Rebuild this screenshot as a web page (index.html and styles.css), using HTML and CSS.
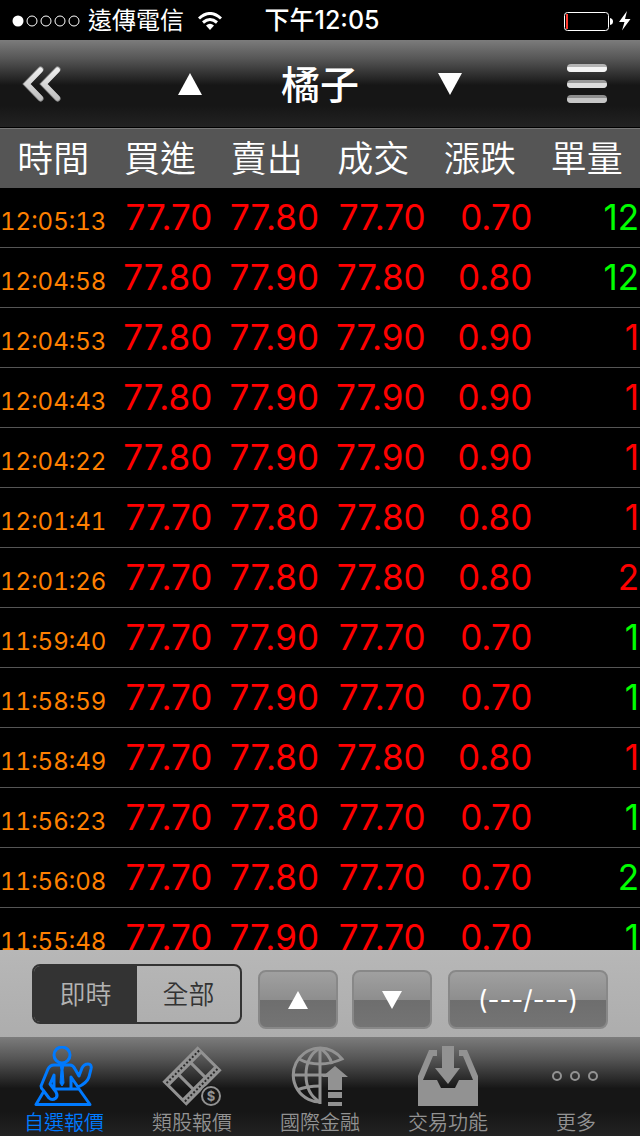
FILE: index.html
```html
<!DOCTYPE html>
<html lang="zh-Hant">
<head>
  <meta charset="UTF-8">
  <meta name="viewport" content="width=device-width">
  <title>橘子</title>
  <link rel="stylesheet" href="styles.css">
</head>
<body>
  <div class="status-bar">
    <div class="carrier">
      <svg width="68" height="12" viewBox="0 0 68 12">
        <circle cx="6" cy="6" r="5.5" fill="#fff"/>
        <g fill="none" stroke="#fff">
          <circle cx="20" cy="6" r="5"/>
          <circle cx="34" cy="6" r="5"/>
          <circle cx="48" cy="6" r="5"/>
          <circle cx="62" cy="6" r="5"/>
        </g>
      </svg>
      <span>遠傳電信</span>
      <svg class="wifi" width="24" height="18" viewBox="0 0 24 18">
        <g fill="none" stroke="#fff" stroke-width="3">
          <path d="M1 6.5Q12 -3.5 23 6.5"/>
          <path d="M5 10.5Q12 4.5 19 10.5"/>
        </g>
        <path d="M8 13.5Q12 10 16 13.5L12 18Z" fill="#fff"/>
      </svg>
    </div>
    <span class="clock">下午12:05</span>
    <div class="battery">
      <svg width="68" height="20" viewBox="0 0 68 20">
        <rect x="0.5" y="1.5" width="44" height="18" rx="3" fill="none" stroke="#fff"/>
        <rect x="2" y="3" width="2" height="15" fill="#ff3b30"/>
        <path d="M46 7q3 .5 3 3.500t-3 3.500z" fill="#fff"/>
        <path d="M63 0L55 11h5.500L58 19.500L66.500 8H61Z" fill="#fff"/>
      </svg>
    </div>
  </div>

  <header class="nav-bar">
    <button class="icon-btn back-btn" aria-label="返回">
      <svg width="40" height="38" viewBox="0 0 40 38">
        <defs>
          <linearGradient id="silver" gradientUnits="userSpaceOnUse" x1="0" y1="0" x2="0" y2="38">
            <stop offset="0" stop-color="#f4f4f4"/>
            <stop offset="1" stop-color="#b8b8b8"/>
          </linearGradient>
        </defs>
        <g fill="none" stroke="#8c8c8c" stroke-width="6" stroke-linecap="round">
          <path d="M18.500 4.500L4.500 19L18.500 33.500"/>
          <path d="M35.500 4.500L21.500 19L35.500 33.500"/>
        </g>
        <g fill="none" stroke="url(#silver)" stroke-width="5" stroke-linecap="round">
          <path d="M18.500 5L5 19L18.500 33"/>
          <path d="M35.500 5L22 19L35.500 33"/>
        </g>
      </svg>
    </button>
    <div class="stock-switch">
      <button class="icon-btn" aria-label="上一檔">
        <svg width="24" height="22" viewBox="0 0 24 22"><path d="M12 0L24 22H0Z" fill="#fff"/></svg>
      </button>
      <h1>橘子</h1>
      <button class="icon-btn" aria-label="下一檔">
        <svg width="24" height="22" viewBox="0 0 24 22"><path d="M0 0H24L12 22Z" fill="#fff"/></svg>
      </button>
    </div>
    <button class="icon-btn menu-btn" aria-label="選單">
      <svg width="40" height="40" viewBox="0 0 40 40">
        <rect y="0" width="40" height="8" rx="4" fill="#b4b4b4"/>
        <path d="M0 4Q0 3 1 3H39Q40 3 40 4Q40 8 36 8H4Q0 8 0 4Z" fill="#f4f4f4"/>
        <rect y="16" width="40" height="8" rx="4" fill="#999"/>
        <path d="M0 20Q0 19 1 19H39Q40 19 40 20Q40 24 36 24H4Q0 24 0 20Z" fill="#ddd"/>
        <rect y="31" width="40" height="8" rx="4" fill="#8e8e8e"/>
        <path d="M0 35Q0 34 1 34H39Q40 34 40 35Q40 39 36 39H4Q0 39 0 35Z" fill="#c6c6c6"/>
      </svg>
    </button>
  </header>

  <main class="tick-list">
    <table>
      <thead>
        <tr><th>時間</th><th>買進</th><th>賣出</th><th>成交</th><th>漲跌</th><th>單量</th></tr>
      </thead>
      <tbody>
        <tr><td>12:05:13</td><td>77.70</td><td>77.80</td><td>77.70</td><td>0.70</td><td class="buy">12</td></tr>
        <tr><td>12:04:58</td><td>77.80</td><td>77.90</td><td>77.80</td><td>0.80</td><td class="buy">12</td></tr>
        <tr><td>12:04:53</td><td>77.80</td><td>77.90</td><td>77.90</td><td>0.90</td><td>1</td></tr>
        <tr><td>12:04:43</td><td>77.80</td><td>77.90</td><td>77.90</td><td>0.90</td><td>1</td></tr>
        <tr><td>12:04:22</td><td>77.80</td><td>77.90</td><td>77.90</td><td>0.90</td><td>1</td></tr>
        <tr><td>12:01:41</td><td>77.70</td><td>77.80</td><td>77.80</td><td>0.80</td><td>1</td></tr>
        <tr><td>12:01:26</td><td>77.70</td><td>77.80</td><td>77.80</td><td>0.80</td><td>2</td></tr>
        <tr><td>11:59:40</td><td>77.70</td><td>77.90</td><td>77.70</td><td>0.70</td><td class="buy">1</td></tr>
        <tr><td>11:58:59</td><td>77.70</td><td>77.90</td><td>77.70</td><td>0.70</td><td class="buy">1</td></tr>
        <tr><td>11:58:49</td><td>77.70</td><td>77.80</td><td>77.80</td><td>0.80</td><td>1</td></tr>
        <tr><td>11:56:23</td><td>77.70</td><td>77.80</td><td>77.70</td><td>0.70</td><td class="buy">1</td></tr>
        <tr><td>11:56:08</td><td>77.70</td><td>77.80</td><td>77.70</td><td>0.70</td><td class="buy">2</td></tr>
        <tr><td>11:55:48</td><td>77.70</td><td>77.90</td><td>77.70</td><td>0.70</td><td class="buy">1</td></tr>
      </tbody>
    </table>
  </main>

  <div class="toolbar">
    <div class="segment" role="radiogroup">
      <label><input type="radio" name="range" checked><span>即時</span></label>
      <label><input type="radio" name="range"><span>全部</span></label>
    </div>
    <div class="pager">
      <button class="tool-btn" aria-label="上一頁">
        <svg width="20" height="18" viewBox="0 0 20 18"><path d="M10 0L20 18H0Z" fill="#fff"/></svg>
      </button>
      <button class="tool-btn" aria-label="下一頁">
        <svg width="20" height="18" viewBox="0 0 20 18"><path d="M0 0H20L10 18Z" fill="#fff"/></svg>
      </button>
    </div>
    <button class="tool-btn page-btn">(---/---)</button>
  </div>

  <nav class="tab-bar">
    <a href="#" class="tab active">
      <svg width="60" height="60" viewBox="0 0 60 60">
        <g fill="none" stroke="currentColor" stroke-width="3" stroke-linejoin="round">
          <circle cx="28" cy="9" r="8"/>
          <path d="M20 19H36Q39 19 41 23L45 30L48 22Q50 18 54 18Q58 18 57 23L55 31Q53 37 44 41L37 31V42"/>
          <path d="M20 19Q16 19 14 23L7 40Q7 42 9 44L15 52Q18 55 22 52Q24 50 22 46L16 38L20 29V42"/>
          <path d="M10 45L2 58.500H56L45 43H21"/>
        </g>
        <path d="M26 18H30L29 24L30 37L28 40L26 37L27 24Z" fill="currentColor" stroke="currentColor"/>
      </svg>
      <span>自選報價</span>
    </a>
    <a href="#" class="tab">
      <svg width="60" height="60" viewBox="0 0 60 60">
        <g transform="rotate(-45 30 30)">
          <path fill="currentColor" fill-rule="evenodd" d="M5 13H55V47H5ZM8 21V39H20V21ZM23 21V39H37V21ZM40 21V39H52V21Z"/>
          <path d="M7 17H54M7 43H54" stroke="#292929" stroke-width="2" stroke-dasharray="2 2"/>
        </g>
        <circle cx="49" cy="50" r="11" fill="#171717"/>
        <circle cx="49" cy="50" r="9" fill="none" stroke="currentColor" stroke-width="2"/>
        <text x="49" y="55" class="coin">$</text>
      </svg>
      <span>類股報價</span>
    </a>
    <a href="#" class="tab">
      <svg width="60" height="60" viewBox="0 0 60 60">
        <g fill="none" stroke="currentColor" stroke-width="3">
          <path d="M30 1V58M3 29H37"/>
          <path d="M31 56A27 27 0 1 1 52 13Q41 18 30 18Q18 18 9 13"/>
          <path d="M30 2Q16 10 16 29Q16 48 30 56"/>
          <path d="M30 2Q39 8 42 18"/>
          <path d="M7 44Q17 40 30 40"/>
        </g>
        <path fill="currentColor" d="M45 20L58 31H52V44H38V31H32ZM38 46H52V52H38ZM38 56H52V60H38Z"/>
      </svg>
      <span>國際金融</span>
    </a>
    <a href="#" class="tab">
      <svg width="60" height="60" viewBox="0 0 60 60">
        <g fill="currentColor">
          <path d="M0 60V30L11 4H19V10H15L5 34H19L23 42H37L41 34H55L45 10H41V4H49L60 30V60Z"/>
          <path d="M24 0H36V22H42L30 38L17 22H24Z"/>
        </g>
      </svg>
      <span>交易功能</span>
    </a>
    <a href="#" class="tab">
      <svg width="60" height="60" viewBox="0 0 60 60">
        <g fill="none" stroke="currentColor" stroke-width="2">
          <circle cx="11" cy="30" r="4"/>
          <circle cx="29" cy="30" r="4"/>
          <circle cx="47" cy="30" r="4"/>
        </g>
      </svg>
      <span>更多</span>
    </a>
  </nav>
</body>
</html>
```

FILE: styles.css
```css
* {
  box-sizing: border-box;
}
body {
  margin: 0;
  height: 100vh;
  display: flex;
  flex-direction: column;
  background: #000;
  color: #fff;
  font-family: Inter, "Noto Sans CJK TC", sans-serif;
}
svg {
  display: block;
  flex-shrink: 0;
}
button {
  font-family: inherit;
  color: #fff;
  cursor: pointer;
}

/* status bar */
.status-bar {
  display: grid;
  grid-template-columns: 1fr auto 1fr;
  align-items: center;
  height: 40px;
  padding: 1px 8px 0 12px;
  font-size: 24px;
  line-height: 39px;
}
.carrier {
  display: flex;
  align-items: center;
  gap: 8px;
}
.wifi {
  margin-left: 6px;
}
.clock {
  font-size: 25px;
  font-weight: 500;
}
.battery {
  justify-self: end;
}

/* title bar */
.nav-bar {
  display: grid;
  grid-template-columns: 1fr auto 1fr;
  align-items: center;
  height: 88px;
  border-bottom: 1px solid #000;
  background: linear-gradient(#7c7c7c, #555 22%, #161616 52%, #161616 75%, #222);
}
.icon-btn {
  padding: 0;
  border: none;
  background: none;
}
.back-btn {
  justify-self: start;
  margin-left: 22px;
}
.menu-btn {
  justify-self: end;
  margin-right: 33px;
}
.stock-switch {
  display: grid;
  grid-template-columns: repeat(3, 130px);
  align-items: center;
  justify-items: center;
}
h1 {
  margin: 0;
  padding-top: 2px;
  font-size: 39px;
  line-height: 60px;
  font-weight: 500;
}

/* tick table */
.tick-list {
  flex: 1;
  min-height: 0;
  overflow: hidden;
}
table {
  width: 100%;
  table-layout: fixed;
  border-collapse: separate;
  border-spacing: 0;
}
th {
  height: 60px;
  padding: 2px 0 0;
  border-top: 1px solid #777;
  background: #555;
  font-size: 36px;
  line-height: 57px;
  font-weight: 350;
}
td {
  height: 60px;
  padding: 0 1px 0 0;
  border-bottom: 1px solid #555;
  color: #f00;
  font-size: 35px;
  line-height: 58px;
  text-align: right;
  vertical-align: baseline;
  white-space: nowrap;
}
td:first-child {
  color: #ff8000;
  font-size: 24px;
  line-height: 40px;
  font-variant-numeric: tabular-nums;
}
td.buy {
  color: #0f0;
}

/* bottom toolbar */
.toolbar {
  display: flex;
  align-items: flex-start;
  justify-content: center;
  gap: 16px;
  height: 87px;
  padding-top: 14px;
  background: linear-gradient(#b7b7b7, #adadad);
}
.segment {
  display: flex;
  width: 210px;
  height: 60px;
  border: 2px solid #333;
  border-radius: 8px;
  overflow: hidden;
  font-size: 26px;
  line-height: 58px;
  font-weight: 350;
}
.segment label {
  flex: 1;
  display: flex;
}
.segment input {
  appearance: none;
  width: 0;
  margin: 0;
}
.segment span {
  flex: 1;
  color: #333;
  text-align: center;
}
.segment input:checked + span {
  background: #333;
  color: #b3b3b3;
}
.pager {
  display: flex;
  gap: 14px;
}
.tool-btn {
  display: flex;
  align-items: center;
  justify-content: center;
  width: 80px;
  height: 59px;
  margin-top: 6px;
  padding: 0;
  border: 2px solid #888;
  border-radius: 8px;
  background: linear-gradient(#a0a0a0, #8e8e8e 50%, #6e6e6e 50%, #747474);
  font-size: 26px;
}
.page-btn {
  width: 160px;
}

/* tab bar */
.tab-bar {
  display: flex;
  height: 99px;
  background: linear-gradient(#7c7c7c, #555 22%, #161616 52%, #161616 75%, #222);
}
.tab {
  flex: 1;
  display: flex;
  flex-direction: column;
  align-items: center;
  gap: 4px;
  padding-top: 9px;
  color: #929292;
  font-size: 20px;
  line-height: 26px;
  font-weight: 350;
  text-decoration: none;
}
.tab.active {
  color: #007aff;
}
.coin {
  fill: currentColor;
  font-size: 13px;
  font-weight: 700;
  text-anchor: middle;
}
```
